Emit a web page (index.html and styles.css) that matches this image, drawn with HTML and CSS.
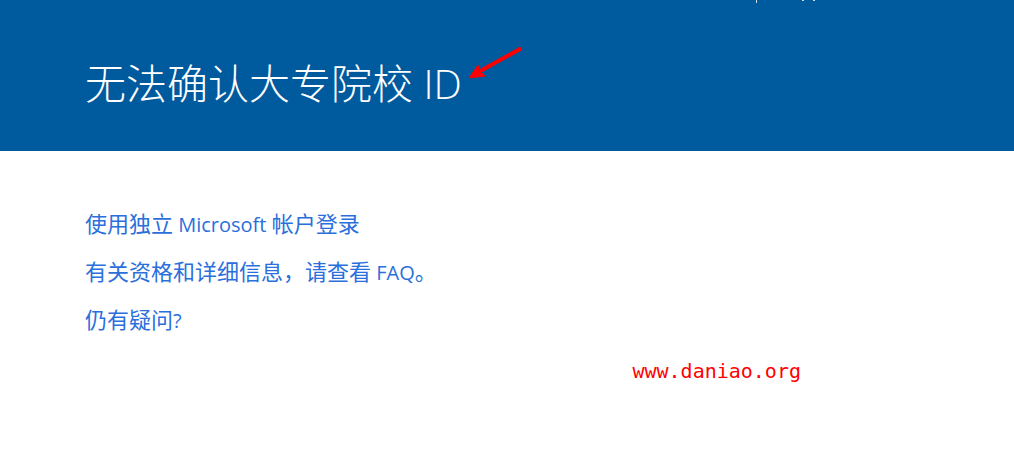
FILE: index.html
```html
<!DOCTYPE html>
<html lang="zh-CN">
<head>
<meta charset="utf-8">
<title>无法确认大专院校 ID</title>
<link rel="stylesheet" href="styles.css">
</head>
<body>
<header class="banner">
  <svg class="marks" viewBox="0 0 60 3" aria-hidden="true"><path d="M1 0h1v3H1zM47 0h2v1h-2zM58 0h2v1h-2z" fill="#d3dde6"/></svg>
  <h1 class="title">无法确认大专院校<span class="latin title-latin"> ID</span></h1>
  <svg class="arrow" viewBox="0 0 56 36" aria-hidden="true"><path d="M51 5 13 26" stroke="#f00" stroke-width="4" stroke-linecap="round"/><path d="M0 34 9 21 10 26 16 32Z" fill="#f00" stroke="#f00" stroke-linejoin="round"/></svg>
</header>
<main class="content">
  <a class="link" href="#">使用独立<span class="latin"> Microsoft </span>帐户登录</a>
  <a class="link" href="#">有关资格和详细信息，请查看<span class="latin"> FAQ</span>。</a>
  <a class="link" href="#">仍有疑问<span class="latin">?</span></a>
  <p class="site">www.daniao.org</p>
</main>
</body>
</html>
```
FILE: styles.css
```css
body {
  margin: 0;
  background: #fff;
  font-family: "Open Sans", "Noto Sans CJK SC", sans-serif;
}
.banner {
  position: relative;
  display: flex;
  padding: 51px 85px 36px;
  background: #005a9e;
  color: #fff;
}
.marks {
  position: absolute;
  top: 0;
  right: 199px;
  width: 60px;
  height: 3px;
}
.title {
  margin: 0;
  font-size: 41px;
  font-weight: 300;
  line-height: 64px;
}
.arrow {
  width: 56px;
  height: 36px;
  margin: -7px 0 0 7px;
}
.content {
  display: flex;
  flex-direction: column;
  align-items: flex-start;
  gap: 16px;
  padding: 56px 85px;
}
.link {
  color: #2a6fdb;
  font-size: 22px;
  line-height: 32px;
  text-decoration: none;
}
.latin {
  font-size: 20px;
  line-height: 1;
}
.title-latin {
  font-size: 40px;
}
.site {
  align-self: flex-end;
  margin: 8px 128px 0 0;
  color: #f00;
  font-family: "DejaVu Sans Mono", monospace;
  font-size: 20px;
}
```
